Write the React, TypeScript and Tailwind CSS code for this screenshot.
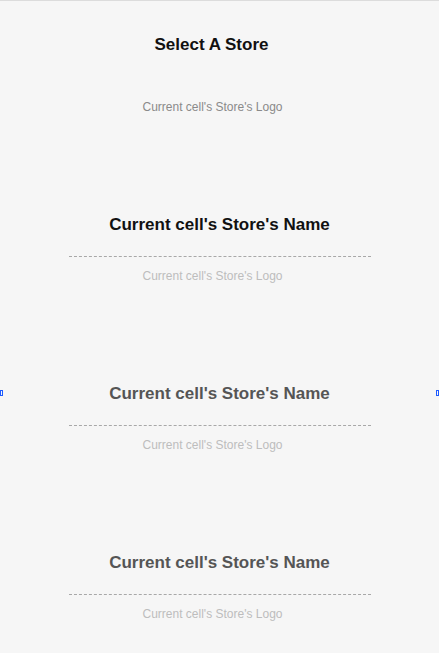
export default function App() {
  const cells = [
    { name: 'text-[#111111]' },
    { name: 'text-[#555555]' },
    { name: 'text-[#555555]' },
  ];

  return (
    <div className="relative w-[439px] h-[653px] overflow-hidden bg-[#f6f6f6] border-t border-[#dcdcdc] font-['Liberation_Sans',Arial,sans-serif]">
      {/* header */}
      <div className="pt-[34px] pr-[16px] text-center text-[17px] leading-[20px] font-bold text-[#111111]">
        Select A Store
      </div>
      <div className="mt-[45px] pr-[14px] text-center text-[12px] leading-[14px] text-[#8a8a8a]">
        Current cell's Store's Logo
      </div>

      {/* store cells */}
      <div className="mt-[101px] flex flex-col gap-[101px]">
        {cells.map((c, i) => (
          <div key={i} className="flex flex-col">
            <div className={`text-center text-[17px] leading-[20px] font-bold ${c.name}`}>
              Current cell's Store's Name
            </div>
            <div className="mt-[21px] ml-[69px] w-[302px] border-t border-dashed border-[#a8a8a8]" />
            <div className="mt-[12px] pr-[14px] text-center text-[12px] leading-[14px] text-[#bdbdbd]">
              Current cell's Store's Logo
            </div>
          </div>
        ))}
      </div>

      {/* selection handles */}
      <div className="absolute left-0 top-[389px] w-[3px] h-[6px] border border-[#1e5bff]" />
      <div className="absolute right-0 top-[389px] w-[3px] h-[6px] border border-[#1e5bff]" />
    </div>
  );
}
